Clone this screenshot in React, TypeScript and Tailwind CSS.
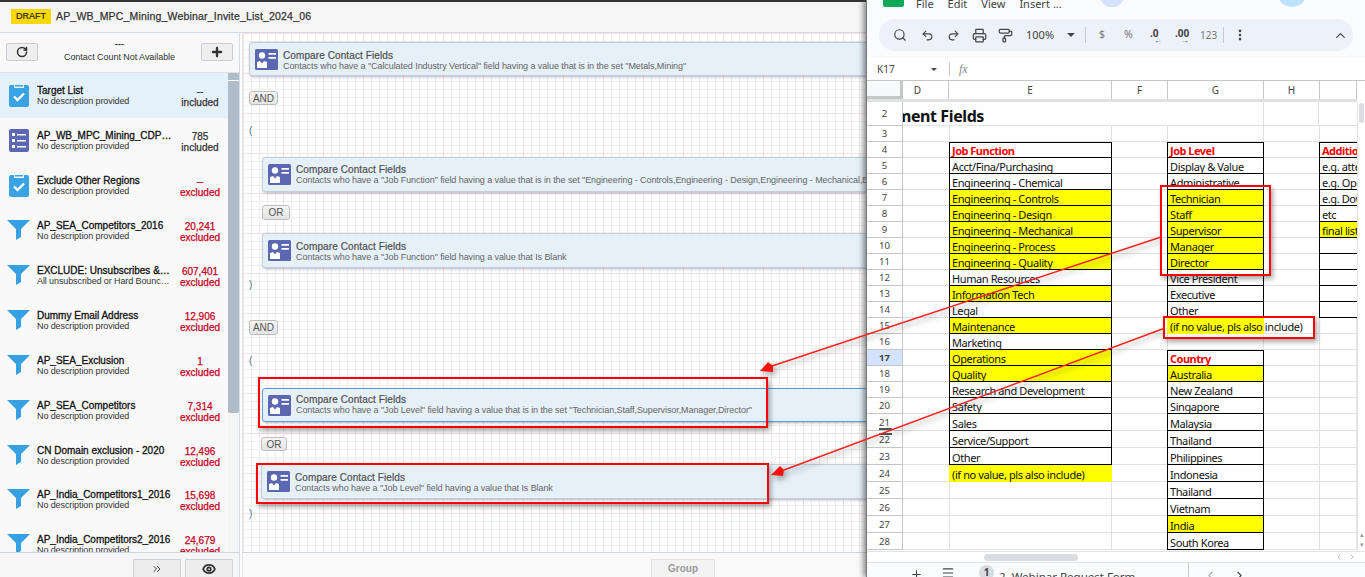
import { ChevronLeft, ChevronRight, ChevronUp, Eye, Menu, MoreVertical, PaintRoller, Plus, Printer, Redo2, RotateCw, Search, Undo2, ChevronsRight } from "lucide-react";

type Kind = "clip" | "list" | "funnel";

const criteria: { kind: Kind; title: string; desc: string; count: string; label: string }[] = [
  { kind: "clip", title: "Target List", desc: "No description provided", count: "--", label: "included" },
  { kind: "list", title: "AP_WB_MPC_Mining_CDP_Audience", desc: "No description provided", count: "785", label: "included" },
  { kind: "clip", title: "Exclude Other Regions", desc: "No description provided", count: "--", label: "excluded" },
  { kind: "funnel", title: "AP_SEA_Competitors_2016", desc: "No description provided", count: "20,241", label: "excluded" },
  { kind: "funnel", title: "EXCLUDE: Unsubscribes & Hard Bounces", desc: "All unsubscribed or Hard Bounced Contacts", count: "607,401", label: "excluded" },
  { kind: "funnel", title: "Dummy Email Address", desc: "No description provided", count: "12,906", label: "excluded" },
  { kind: "funnel", title: "AP_SEA_Exclusion", desc: "No description provided", count: "1", label: "excluded" },
  { kind: "funnel", title: "AP_SEA_Competitors", desc: "No description provided", count: "7,314", label: "excluded" },
  { kind: "funnel", title: "CN Domain exclusion - 2020", desc: "No description provided", count: "12,496", label: "excluded" },
  { kind: "funnel", title: "AP_India_Competitors1_2016", desc: "No description provided", count: "15,698", label: "excluded" },
  { kind: "funnel", title: "AP_India_Competitors2_2016", desc: "No description provided", count: "24,679", label: "excluded" },
];

function ListIcon({ kind }: { kind: Kind }) {
  if (kind === "funnel") {
    return (
      <svg width="23" height="20" viewBox="0 0 23 20" aria-hidden="true">
        <path d="M0 0H23L14 9V17L9 20V9Z" fill="#37a0e3" />
      </svg>
    );
  }
  if (kind === "list") {
    return (
      <svg width="20" height="23" viewBox="0 0 20 23" className="ml-[2px]" aria-hidden="true">
        <rect width="20" height="23" rx="2" fill="#5c68b1" />
        <path d="M3 4h3v3H3zM8 5h9v1.500H8zM3 10h3v3H3zM8 11h9v1.500H8zM3 16h3v3H3zM8 17h9v1.500H8z" fill="#fff" />
      </svg>
    );
  }
  return (
    <svg width="20" height="23" viewBox="0 0 20 23" className="ml-[2px]" aria-hidden="true">
      <path d="M2 1h3v3h10V1h3a2 2 0 0 1 2 2v18a2 2 0 0 1-2 2H2a2 2 0 0 1-2-2V3a2 2 0 0 1 2-2z" fill="#3aa3e3" />
      <path d="M6 1h8v1.500H6z" fill="#3aa3e3" />
      <path d="M5 12.500l3.500 3.500L15 9.500" fill="none" stroke="#fff" strokeWidth="2.400" />
    </svg>
  );
}

function ContactIcon() {
  return (
    <svg width="23" height="21" viewBox="0 0 23 21" className="shrink-0" aria-hidden="true">
      <rect width="23" height="21" rx="1.500" fill="#5b67b1" />
      <circle cx="7" cy="6.500" r="3.200" fill="#fff" />
      <path d="M2 19v-6l3-1 2 2.500L9 12l3 1v6z" fill="#fff" />
      <path d="M13.500 4h7.500v1.800h-7.500zM13.500 8h7.500v1.800h-7.500z" fill="#fff" />
    </svg>
  );
}

function Card({ desc, active, className, textClass = "" }: { desc: string; active?: boolean; className: string; textClass?: string }) {
  return (
    <div
      className={`flex items-center gap-[5px] w-[760px] shrink-0 bg-[#e5f0f9] border rounded-[3px] pl-[5px] shadow-[1px_1px_3px_rgba(80,90,110,0.45)] ${active ? "border-[#5b9bdc]" : "border-[#c5ced8]"} ${className}`}
    >
      <ContactIcon />
      <div className={`min-w-0 ${textClass}`}>
        <div className="text-[10px] leading-[11px] text-[#4f4f4f] tracking-[0.1px] [-webkit-text-stroke:0.2px]">Compare Contact Fields</div>
        <div className="text-[9px] leading-[11px] text-[#666] tracking-[-0.08px] whitespace-nowrap">{desc}</div>
      </div>
    </div>
  );
}

function Op({ label, className }: { label: string; className: string }) {
  return (
    <div className={`flex items-center justify-center shrink-0 bg-gradient-to-b from-[#f5f5f5] to-[#e4e4e4] border border-[#bdbdbd] rounded-[3px] text-[10px] text-[#555] ${className}`}>
      {label}
    </div>
  );
}

function Paren({ text, className }: { text: string; className: string }) {
  return <div className={`ml-[0px] text-[10px] leading-[12px] text-[#52729b] ${className}`}>{text}</div>;
}

function LeftPanel() {
  return (
    <div className="flex flex-col w-[240px] shrink-0 bg-[#f9f9f9] border-r border-[#d6dce3]">
      <div className="flex items-start justify-between h-[40px] shrink-0 px-[6px] pt-[10px] border-b border-[#dde2e8]">
        <button className="flex items-center justify-center w-[32px] h-[18px] bg-[#eeeeee] border border-[#c9ced4] rounded-[2px]">
          <RotateCw size={12} strokeWidth={3} className="text-[#333]" />
        </button>
        <div className="text-center text-[9px] leading-[13px] tracking-[-0.05px] text-[#333] -mt-[5px]">
          <div className="font-bold">---</div>
          <div>Contact Count Not Available</div>
        </div>
        <button className="flex items-center justify-center w-[32px] h-[18px] bg-[#eeeeee] border border-[#c9ced4] rounded-[2px]">
          <Plus size={14} strokeWidth={4} className="text-[#333]" />
        </button>
      </div>
      <div className="flex flex-1 min-h-0 overflow-hidden">
        <div className="flex-1 min-w-0">
          {criteria.map((c, i) => (
            <div key={c.title} className={`flex items-center h-[44.9px] pl-[7px] ${i === 0 ? "bg-[#e5f1fa]" : ""}`}>
              <div className="flex justify-start w-[30px] shrink-0">
                <ListIcon kind={c.kind} />
              </div>
              <div className="w-[135px] shrink-0 mt-[2px]">
                <div className="truncate text-[10px] leading-[11px] text-[#111] [-webkit-text-stroke:0.3px]">{c.title}</div>
                <div className="truncate text-[9px] leading-[11px] tracking-[-0.1px] text-[#333]">{c.desc}</div>
              </div>
              <div className={`flex-1 text-center text-[10px] leading-[11px] mt-[4px] [-webkit-text-stroke:0.25px] ${c.label === "excluded" ? "text-[#c8001e]" : "text-[#333]"}`}>
                <div>{c.count}</div>
                <div>{c.label}</div>
              </div>
            </div>
          ))}
        </div>
        <div className="w-[11px] shrink-0 bg-[#f4f5f6]">
          <div className="h-[7px] bg-[#b0bcc8]" />
          <div className="h-px bg-white" />
          <div className="h-[332px] bg-[#b0bcc8] rounded-b-[2px]" />
        </div>
      </div>
      <div className="flex justify-end gap-[4px] h-[25px] shrink-0 pt-[6px] pr-[6px] border-t border-[#cfd6de] bg-[#f6f6f6]">
        <button className="flex items-center justify-center w-[48px] h-[19px] bg-[#ededed] border border-[#cfd3d8]">
          <ChevronsRight size={12} className="text-[#444]" />
        </button>
        <button className="flex items-center justify-center w-[48px] h-[19px] bg-[#ededed] border border-[#cfd3d8]">
          <Eye size={14} strokeWidth={3} className="text-[#333]" />
        </button>
      </div>
    </div>
  );
}

function Canvas() {
  return (
    <div className="flex flex-col flex-1 min-w-0 ml-[2px] border-l border-[#e4e6ea]">
      <div className="flex-1 min-h-0 overflow-hidden bg-white bg-[linear-gradient(#f5dfe3_1px,transparent_1px),linear-gradient(90deg,#f5dfe3_1px,transparent_1px),linear-gradient(#efefef_1px,transparent_1px),linear-gradient(90deg,#efefef_1px,transparent_1px)] bg-[size:40px_40px,40px_40px,8px_8px,8px_8px] pl-[6px]">
        <div className="flex flex-col">
          <Card className="h-[34px] mt-[9px]" textClass="mt-[4px]" desc={`Contacts who have a "Calculated Industry Vertical" field having a value that is in the set "Metals,Mining"`} />
          <Op label="AND" className="w-[29px] h-[14px] mt-[15px]" />
          <Paren text="(" className="mt-[20px]" />
          <Card className="h-[35px] ml-[13px] mt-[20px]" desc={`Contacts who have a "Job Function" field having a value that is in the set "Engineering - Controls,Engineering - Design,Engineering - Mechanical,Engineering - Process,Engineering - Quality"`} />
          <Op label="OR" className="w-[28px] h-[15px] ml-[13px] mt-[13px]" />
          <Card className="h-[35px] ml-[13px] mt-[13px]" textClass="mt-[2px]" desc={`Contacts who have a "Job Function" field having a value that Is Blank`} />
          <Paren text=")" className="mt-[11px]" />
          <Op label="AND" className="w-[29px] h-[15px] mt-[29px]" />
          <Paren text="(" className="mt-[20px]" />
          <Card active className="h-[34px] ml-[13px] mt-[21px]" desc={`Contacts who have a "Job Level" field having a value that is in the set "Technician,Staff,Supervisor,Manager,Director"`} />
          <Op label="OR" className="w-[26px] h-[14px] ml-[12px] mt-[15px]" />
          <Card className="h-[35px] ml-[12px] mt-[13px]" textClass="mt-[2px]" desc={`Contacts who have a "Job Level" field having a value that Is Blank`} />
          <Paren text=")" className="mt-[9px]" />
        </div>
      </div>
      <div className="flex h-[25px] shrink-0 pt-[6px] pl-[408px] border-t border-[#cfd6de] bg-[#fafafa]">
        <button className="w-[64px] h-[19px] bg-[#f3f3f3] border border-[#e2e2e2] text-[10px] font-bold text-[#9a9a9a]">Group</button>
      </div>
    </div>
  );
}

type CellData = { t?: string; y?: boolean; red?: boolean; top?: boolean; bare?: boolean };

const JOB_E: (CellData | null)[] = [
  { t: "Job Function", red: true, top: true },
  { t: "Acct/Fina/Purchasing" },
  { t: "Engineering - Chemical" },
  { t: "Engineering - Controls", y: true },
  { t: "Engineering - Design", y: true },
  { t: "Engineering - Mechanical", y: true },
  { t: "Engineering - Process", y: true },
  { t: "Engineering - Quality", y: true },
  { t: "Human Resources" },
  { t: "Information Tech", y: true },
  { t: "Legal" },
  { t: "Maintenance", y: true },
  { t: "Marketing" },
  { t: "Operations", y: true },
  { t: "Quality", y: true },
  { t: "Research and Development" },
  { t: "Safety" },
  { t: "Sales" },
  { t: "Service/Support" },
  { t: "Other" },
  { t: "(if no value, pls also include)", y: true, bare: true },
  null, null, null, null,
];

const JOB_G: (CellData | null)[] = [
  { t: "Job Level", red: true, top: true },
  { t: "Display & Value" },
  { t: "Administrative" },
  { t: "Technician", y: true },
  { t: "Staff", y: true },
  { t: "Supervisor", y: true },
  { t: "Manager", y: true },
  { t: "Director", y: true },
  { t: "Vice President" },
  { t: "Executive" },
  { t: "Other" },
  { t: "(if no value, pls also include)", y: true, bare: true },
  null,
  { t: "Country", red: true, top: true },
  { t: "Australia", y: true },
  { t: "New Zealand" },
  { t: "Singapore" },
  { t: "Malaysia" },
  { t: "Thailand" },
  { t: "Philippines" },
  { t: "Indonesia" },
  { t: "Thailand" },
  { t: "Vietnam" },
  { t: "India", y: true },
  { t: "South Korea" },
];

const JOB_I: (CellData | null)[] = [
  { t: "Additional", red: true, top: true },
  { t: "e.g. attendee" },
  { t: "e.g. Operations" },
  { t: "e.g. Downloads" },
  { t: "etc" },
  { t: "final list", y: true },
  {}, {}, {}, {}, {},
];

function Boxed({ c, width, clip, noRight }: { c: CellData | null | undefined; width: string; clip?: boolean; noRight?: boolean }) {
  if (!c) {
    return <div className={`${width} shrink-0 h-full border-b border-r border-l border-[#e1e2e3]`} />;
  }
  const edge = c.bare ? "border-l-[#ffff00] border-r-[#ffff00] border-b-[#ffff00]" : "border-l-black border-r-black border-b-black";
  return (
    <div
      className={`${width} shrink-0 h-full flex items-end border-l border-b pl-[2px] text-[11px] leading-[12px] whitespace-nowrap ${noRight ? "" : "border-r"} ${edge} ${c.top ? "border-t border-t-black" : ""} ${c.y ? "bg-[#ffff00]" : "bg-white"} ${c.red ? "text-[#ff0000] font-bold tracking-[-0.5px]" : "text-[#111] tracking-[-0.4px]"} ${clip ? "overflow-hidden" : ""}`}
    >
      <span className="relative z-[1]">{c.t}</span>
    </div>
  );
}

function SheetRow({ n, h, idx }: { n: number; h: string; idx: number }) {
  return (
    <div className={`flex ${h}`}>
      <div className={`w-[36px] shrink-0 flex items-center justify-center pt-[2px] border-r border-b border-[#c4c7c5] text-[9.500px] text-[#444] ${n === 17 ? "bg-[#d3e3fd] font-bold" : "bg-white"}`}>{n}</div>
      <div className="w-[46px] shrink-0 h-full border-b border-[#e1e2e3]" />
      <Boxed c={JOB_E[idx]} width="w-[163px]" />
      <div className="w-[55px] shrink-0 h-full border-b border-[#e1e2e3]" />
      <Boxed c={JOB_G[idx]} width="w-[97px]" />
      <div className="w-[55px] shrink-0 h-full border-b border-[#e1e2e3]" />
      <Boxed c={JOB_I[idx]} width="w-[38px]" clip noRight />
    </div>
  );
}

function ColHead({ w, label, className = "" }: { w: string; label: string; className?: string }) {
  return <div className={`${w} shrink-0 flex items-center justify-center border-r border-[#c4c7c5] text-[10px] text-[#444] ${className}`}>{label}</div>;
}

function SheetWindow() {
  const rows = Array.from({ length: 25 }, (_, i) => i + 4);
  return (
    <div className="relative z-10 flex flex-col w-[499px] shrink-0 h-full bg-white border-l border-[#777] shadow-[-3px_0_5px_rgba(60,60,60,0.55)] font-['Noto_Sans',sans-serif]">
      {/* Menu */}
      <div className="h-[19px] shrink-0 bg-[#f9fbfd] relative overflow-hidden">
        <div className="absolute left-[16px] -top-[4px] w-[21px] h-[11px] rounded-[2px] bg-[#0fa958]" />
        <div className="absolute left-[233px] -top-[16px] w-[24px] h-[23px] rounded-full bg-[#d3e3fd]" />
        <div className="absolute left-[410px] -top-[23px] w-[30px] h-[30px] rounded-full bg-[#bfe3fb]" />
        <div className="flex gap-[14px] pl-[49px] -mt-[4px] text-[11px] leading-[16px] text-[#444]">
          <span>File</span>
          <span>Edit</span>
          <span>View</span>
          <span>Insert</span>
          <span className="-ml-[11px]">...</span>
        </div>
      </div>
      {/* Toolbar */}
      <div className="h-[39px] shrink-0 bg-[#f9fbfd] px-[12px]">
        <div className="flex items-center h-[32px] rounded-full bg-[#edf2fa] pl-[14px] text-[#444]">
          <Search size={14} strokeWidth={2} />
          <Undo2 size={13} strokeWidth={2} className="ml-[14px]" />
          <Redo2 size={13} strokeWidth={2} className="ml-[13px]" />
          <Printer size={15} strokeWidth={2} className="ml-[12px]" />
          <PaintRoller size={15} strokeWidth={2} className="ml-[11px]" />
          <span className="ml-[13px] text-[11px] w-[30px]">100%</span>
          <div className="ml-[11px] w-0 h-0 border-x-[4px] border-x-transparent border-t-[4px] border-t-[#444]" />
          <div className="ml-[10px] w-px h-[16px] bg-[#c7c9cc]" />
          <span className="ml-[13px] text-[10.500px] w-[6px] text-[#777]">$</span>
          <span className="ml-[19px] text-[10.500px] w-[9px] text-[#777]">%</span>
          <span className="ml-[17px] text-[10px] font-bold w-[10px] leading-[10px]">.0<span className="block text-[8px] leading-[4px] pl-[4px]">←</span></span>
          <span className="ml-[15px] text-[10px] font-bold w-[14px] leading-[10px]">.00<span className="block text-[8px] leading-[4px] pl-[6px]">→</span></span>
          <span className="ml-[11px] text-[10px] w-[15px] text-[#777]">123</span>
          <div className="ml-[8px] w-px h-[16px] bg-[#c7c9cc]" />
          <MoreVertical size={14} strokeWidth={2.5} className="ml-[9px]" />
          <ChevronUp size={15} strokeWidth={2} className="ml-[86px]" />
        </div>
      </div>
      {/* Name box */}
      <div className="flex items-center h-[23px] shrink-0 bg-white border-b border-[#c4c7c5] text-[#444]">
        <span className="ml-[10px] w-[54px] text-[10px]">K17</span>
        <div className="w-0 h-0 border-x-[3.500px] border-x-transparent border-t-[3.500px] border-t-[#444]" />
        <div className="ml-[12px] w-px h-[14px] bg-[#c7c9cc]" />
        <span className="ml-[9px] text-[12px] italic text-[#888] font-['Liberation_Serif',serif]">fx</span>
      </div>
      {/* Column heads */}
      <div className="flex h-[18px] shrink-0">
        <div className="w-[36px] shrink-0 bg-[#f8f9fa] border-r-[3px] border-b-[3px] border-[#c4c7c5]" />
        <ColHead w="w-[46px]" label="D" className="pr-[16px]" />
        <ColHead w="w-[163px]" label="E" />
        <ColHead w="w-[56px]" label="F" />
        <ColHead w="w-[96px]" label="G" />
        <ColHead w="w-[56px]" label="H" />
        <ColHead w="w-[37px]" label="" />
      </div>
      <div className="h-[3px] shrink-0 bg-[#dfe1e3] w-[490px]" />
      {/* Grid */}
      <div className="flex flex-1 min-h-0">
        <div className="relative w-[490px] shrink-0 overflow-hidden">
          <div className="flex h-[24px]">
            <div className="w-[36px] shrink-0 flex items-center justify-center pt-[2px] border-r border-b border-[#c4c7c5] text-[9.500px] text-[#444]">2</div>
            <div className="relative w-[361px] shrink-0 border-r border-b border-[#e1e2e3] overflow-hidden">
              <div className="absolute right-[279px] top-0 h-full flex items-center pt-[4px] text-[16px] font-bold tracking-[-0.4px] text-[#111] whitespace-nowrap">Segment Fields</div>
            </div>
            <div className="w-[55px] shrink-0 border-r border-b border-[#e1e2e3]" />
            <div className="flex-1 border-b border-[#e1e2e3]" />
          </div>
          <div className="flex h-[16px]">
            <div className="w-[36px] shrink-0 flex items-center justify-center pt-[2px] border-r border-b border-[#c4c7c5] text-[9.500px] text-[#444]">3</div>
            <div className="w-[46px] border-b border-[#e1e2e3]" />
            <div className="w-[163px] border-b border-l border-r border-[#e1e2e3]" />
            <div className="w-[55px] border-b border-[#e1e2e3]" />
            <div className="w-[97px] border-b border-l border-r border-[#e1e2e3]" />
            <div className="w-[55px] border-b border-[#e1e2e3]" />
            <div className="flex-1 border-b border-l border-[#e1e2e3]" />
          </div>
          {rows.map((n, i) => (
            <SheetRow key={n} n={n} idx={i} h={n <= 20 ? "h-[16px]" : "h-[17px]"} />
          ))}
          <div className="absolute left-[12px] top-[326px] w-[13px] h-[7px] border-y-2 border-[#555]" />
        </div>
        <div className="flex flex-col flex-1 bg-white border-l border-[#e1e2e3]">
          <div className="mt-[1px] mx-[1px] h-[20px] rounded-full bg-[#dadce0]" />
          <div className="mt-auto mb-[1px] text-center text-[7px] leading-[10px] text-[#999]">
            <div>▴</div>
            <div>▾</div>
          </div>
        </div>
      </div>
      {/* Horizontal scrollbar */}
      <div className="flex items-center h-[12px] shrink-0 bg-white border-y border-[#e1e2e3]">
        <div className="ml-[117px] w-[94px] h-[7px] rounded-full bg-[#dadce0]" />
        <div className="ml-auto mr-[9px] flex text-[#999]">
          <ChevronLeft size={8} className="mr-[5px]" />
          <ChevronRight size={8} />
        </div>
      </div>
      {/* Tabs */}
      <div className="flex items-start h-[14px] shrink-0 bg-[#f9fbfd] overflow-hidden text-[#444]">
        <Plus size={13} className="ml-[43px] mt-[5px]" />
        <Menu size={14} className="ml-[18px] mt-[3px]" />
        <div className="ml-[24px] mt-[2px] w-[15px] h-[15px] rounded-full bg-[#d8dce2] text-center text-[10px] font-bold">1</div>
        <span className="ml-[5px] mt-[5px] text-[11.500px] whitespace-nowrap">2. Webinar Request Form</span>
        <div className="ml-[53px] w-px h-[14px] bg-[#c7c9cc]" />
        <ChevronLeft size={13} className="ml-[15px] mt-[6px] text-[#aaa]" />
        <ChevronRight size={13} className="ml-[16px] mt-[6px]" />
      </div>
    </div>
  );
}

function RedBox({ className }: { className: string }) {
  return <div className={`absolute border-2 border-[#ff0000] shadow-[2px_3px_5px_rgba(0,0,0,0.35)] pointer-events-none ${className}`} />;
}

export default function App() {
  return (
    <div className="relative flex w-[1365px] h-[577px] overflow-hidden bg-white font-['Liberation_Sans',Arial,sans-serif]">
      <div className="flex flex-col flex-1 min-w-0">
        <div className="h-[2px] shrink-0 bg-[#333]" />
        <header className="flex items-center h-[31px] shrink-0 bg-[#f6f6f6] border-b border-[#d5dbe2] pl-[11px]">
          <span className="flex items-center justify-center w-[40px] h-[15px] -mt-[1px] bg-[#ffd800] text-[9px] text-[#222] [-webkit-text-stroke:0.2px]">DRAFT</span>
          <h1 className="ml-[5px] text-[10.500px] font-normal text-[#333] tracking-[0.18px] [-webkit-text-stroke:0.25px] whitespace-nowrap">AP_WB_MPC_Mining_Webinar_Invite_List_2024_06</h1>
        </header>
        <div className="flex flex-1 min-h-0">
          <LeftPanel />
          <Canvas />
        </div>
      </div>
      <SheetWindow />

      {/* Annotations drawn over the screenshot */}
      <RedBox className="left-[258px] top-[377px] w-[510px] h-[51px] z-20" />
      <RedBox className="left-[256px] top-[463px] w-[513px] h-[41px] z-20" />
      <RedBox className="left-[1160px] top-[185px] w-[111px] h-[91px] z-20" />
      <RedBox className="left-[1163px] top-[316px] w-[152px] h-[23px] z-20" />
      <svg width="1365" height="577" viewBox="0 0 1365 577" className="absolute left-0 top-0 z-20 pointer-events-none drop-shadow-[2px_3px_3px_rgba(0,0,0,0.4)]" aria-hidden="true">
        <line x1="1161" y1="237" x2="772" y2="366" stroke="#ff2020" strokeWidth="1.500" />
        <path d="M760 371 L768 362 L773 366 L773 372 Z" fill="#ff1010" />
        <line x1="1165" y1="328" x2="784" y2="470" stroke="#ff2020" strokeWidth="1.500" />
        <path d="M771 475 L780 466 L784 470 L783 476 Z" fill="#ff1010" />
      </svg>
    </div>
  );
}
